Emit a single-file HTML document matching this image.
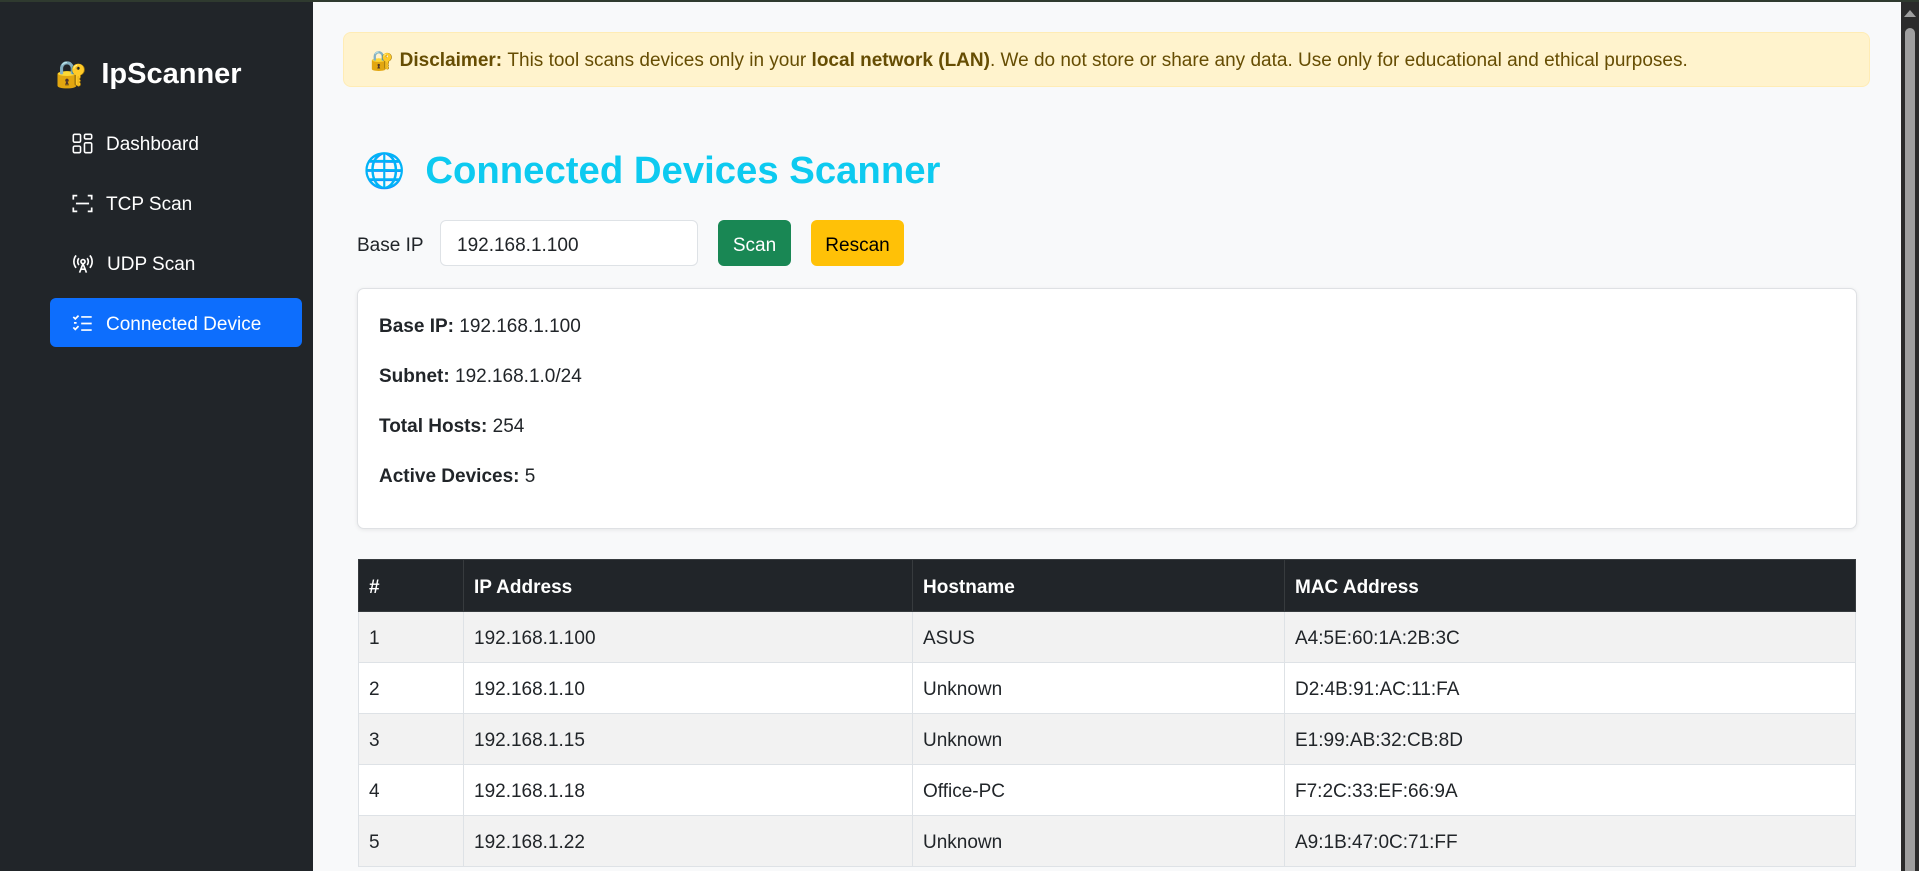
<!DOCTYPE html>
<html style="overflow:hidden"><head><meta charset="utf-8"><style>
*{box-sizing:border-box;margin:0;padding:0}
html,body{overflow:hidden}
body{width:1919px;height:871px;background:#f8f9fa;font-family:"Liberation Sans",sans-serif;color:#212529;position:relative;font-size:19px}
.topline{position:absolute;left:0;top:0;width:1919px;height:2px;background:#2f3a2f}
.side{position:absolute;left:0;top:2px;width:313px;height:869px;background:#212529;color:#fff}
.brand{position:absolute;left:55px;top:56px;font-size:29px;font-weight:bold;display:flex;align-items:center}
.brand span.e{font-size:26px;margin-right:14px}
.nav{position:absolute;left:50px;width:252px;height:49px;border-radius:6px;display:flex;align-items:center;padding-left:22px;padding-top:5px;font-size:19px}
.nav svg{margin-right:13px;margin-top:-4px}
.nav.active{background:#0d6efd}
.alert{position:absolute;left:343px;top:32px;width:1527px;height:55px;background:#fff3cd;border:1px solid #ffecb5;border-radius:8px;color:#664d03;font-size:19px;display:flex;align-items:center;padding-left:26px;padding-top:2px}
.alert b{font-weight:bold}
h2{position:absolute;left:363px;top:149px;font-size:38.3px;color:#0dcaf0;font-weight:bold;display:flex;align-items:center;white-space:nowrap}
h2 .e{font-size:34px;margin-right:20px;color:#3b82f6}
.lbl{position:absolute;left:357px;top:235px;font-size:19px}
.inp{position:absolute;left:440px;top:220px;width:258px;height:46px;background:#fff;border:1px solid #dee2e6;border-radius:6px;padding-left:16px;padding-top:3px;line-height:44px;font-size:19px}
.btn{position:absolute;top:220px;height:46px;border-radius:6px;line-height:46px;padding-top:3px;text-align:center;font-size:19px}
.card{position:absolute;left:357px;top:288px;width:1500px;height:241px;background:#fff;border:1px solid #dfe1e4;border-radius:7px;box-shadow:0 1px 4px rgba(0,0,0,.08)}
.card p{position:absolute;left:21px;font-size:19px}
table{position:absolute;left:358px;top:559px;width:1498px;border-collapse:collapse;font-size:19px}
th,td{border:1px solid #dee2e6;height:51px;padding:4px 0 0 10px;text-align:left;vertical-align:middle}
th{background:#212529;color:#fff;border-color:#373b3e;font-weight:bold;height:52px}
tr.s td{background:#f2f2f2}
td{background:#fff}
.sb{position:absolute;left:1901px;top:2px;width:18px;height:869px;background:#2b2b2b}
.thumb{position:absolute;left:4px;top:26px;width:10px;height:850px;background:#9f9f9f;border-radius:5px}
.arr{position:absolute;left:3px;top:8px;width:0;height:0;border-left:6px solid transparent;border-right:6px solid transparent;border-bottom:7px solid #9f9f9f}
</style></head><body>
<div class="topline"></div>
<div class="side">
<div class="brand"><span class="e">🔐</span>IpScanner</div>
<div class="nav" style="top:116px"><svg width="21" height="21" viewBox="0 0 16 16" fill="none" stroke="#fff" stroke-width="1.2"><rect x="1" y="1" width="5.5" height="6" rx="1"/><rect x="9.5" y="1" width="5.5" height="3.5" rx="1"/><rect x="1" y="10" width="5.5" height="5" rx="1"/><rect x="9.5" y="7.5" width="5.5" height="7.5" rx="1"/></svg>Dashboard</div>
<div class="nav" style="top:176px"><svg width="21" height="21" viewBox="0 0 16 16" fill="none" stroke="#fff" stroke-width="1.3"><path d="M1 5V2h3M12 2h3v3M15 11v3h-3M4 14H1v-3M3 8h10"/></svg>TCP Scan</div>
<div class="nav" style="top:236px"><svg width="22" height="22" viewBox="0 0 16 16" fill="none" stroke="#fff" stroke-width="1.2"><path d="M3 2.5a7 7 0 0 0 0 9M13 2.5a7 7 0 0 1 0 9M5 4.5a4 4 0 0 0 0 5M11 4.5a4 4 0 0 1 0 5"/><circle cx="8" cy="7" r="1.5"/><path d="M8 8.5L5.5 15M8 8.5l2.5 6.5M6.5 12.5h3"/></svg>UDP Scan</div>
<div class="nav active" style="top:296px"><svg width="21" height="21" viewBox="0 0 16 16" fill="none" stroke="#fff" stroke-width="1.3"><path d="M1 3l1.5 1.5L5 2M1 11l1.5 1.5L5 10M7 3h8M7 8h8M7 13h8M1.5 7.5h2"/></svg>Connected Device</div>
</div>
<div class="alert"><span style="margin-right:6px">🔐</span><b>Disclaimer:</b>&nbsp;This tool scans devices only in your&nbsp;<b>local network (LAN)</b>. We do not store or share any data. Use only for educational and ethical purposes.</div>
<h2><span class="e">🌐</span>Connected Devices Scanner</h2>
<div class="lbl">Base IP</div>
<div class="inp">192.168.1.100</div>
<div class="btn" style="left:718px;width:73px;background:#198754;color:#fff">Scan</div>
<div class="btn" style="left:811px;width:93px;background:#ffc107;color:#000">Rescan</div>
<div class="card">
<p style="top:27px"><b>Base IP:</b> 192.168.1.100</p>
<p style="top:77px"><b>Subnet:</b> 192.168.1.0/24</p>
<p style="top:127px"><b>Total Hosts:</b> 254</p>
<p style="top:177px"><b>Active Devices:</b> 5</p>
</div>
<table>
<tr><th style="width:105px">#</th><th style="width:449px">IP Address</th><th style="width:372px">Hostname</th><th>MAC Address</th></tr>
<tr class="s"><td>1</td><td>192.168.1.100</td><td>ASUS</td><td>A4:5E:60:1A:2B:3C</td></tr>
<tr><td>2</td><td>192.168.1.10</td><td>Unknown</td><td>D2:4B:91:AC:11:FA</td></tr>
<tr class="s"><td>3</td><td>192.168.1.15</td><td>Unknown</td><td>E1:99:AB:32:CB:8D</td></tr>
<tr><td>4</td><td>192.168.1.18</td><td>Office-PC</td><td>F7:2C:33:EF:66:9A</td></tr>
<tr class="s"><td>5</td><td>192.168.1.22</td><td>Unknown</td><td>A9:1B:47:0C:71:FF</td></tr>
</table>
<div class="sb"><div class="arr"></div><div class="thumb"></div></div>
</body></html>
